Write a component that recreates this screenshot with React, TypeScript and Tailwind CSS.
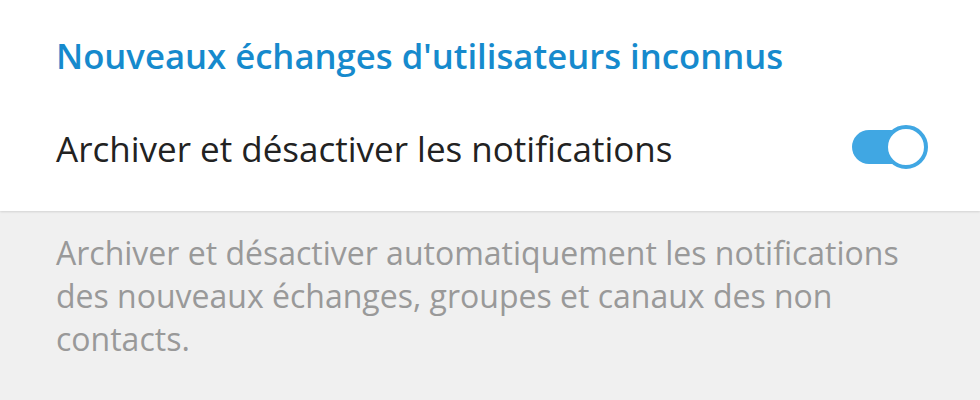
import React, { useState } from 'react';

const Toggle = ({ on, onChange }: { on: boolean; onChange: () => void }) => {
  return <button type="button" onClick={onChange} className="relative flex items-center w-[76px] h-[44px] shrink-0 mb-[4px]">
      <span className={`block w-[62px] h-[34px] rounded-full ${on ? 'bg-[#40a7e3]' : 'bg-[#d3d3d3]'}`} />
      <span className={`absolute top-0 ${on ? 'left-[32px] border-[#40a7e3]' : 'left-0 border-[#d3d3d3]'} w-[44px] h-[44px] rounded-full bg-white border-[4px]`} />
    </button>;
};

export default function App() {
  const [archive, setArchive] = useState(true);
  return <div className="w-[980px] h-[400px] bg-[#f0f0f0] font-['Open_Sans',sans-serif] overflow-hidden">
      <div className="bg-white pt-[34px] pb-[38px] shadow-[0_1px_2px_rgba(0,0,0,0.12)]">
        <h2 className="px-[56px] text-[34.7px] leading-[44px] font-semibold text-[#168acd] whitespace-nowrap">
          Nouveaux échanges d'utilisateurs inconnus
        </h2>
        <div className="flex items-center justify-between pl-[56px] pr-[52px] mt-[47px]">
          <span className="text-[35px] leading-[44px] text-[#222222]">
            Archiver et désactiver les notifications
          </span>
          <Toggle on={archive} onChange={() => setArchive(!archive)} />
        </div>
      </div>
      <p className="pl-[56px] pr-[50px] pt-[20px] text-[32px] leading-[43px] text-[#999999]">
        Archiver et désactiver automatiquement les notifications des nouveaux échanges, groupes et canaux des non contacts.
      </p>
    </div>;
}
